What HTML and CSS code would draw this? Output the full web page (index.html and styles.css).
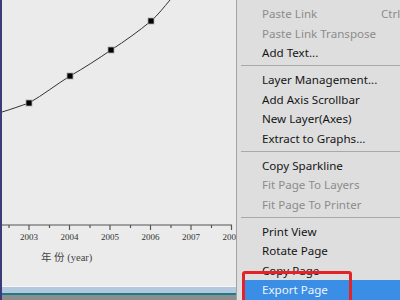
FILE: index.html
```html
<!DOCTYPE html>
<html lang="en">
<head>
    <meta charset="UTF-8">
    <title>Graph Context Menu</title>
    <link rel="stylesheet" href="styles.css">
</head>
<body>
    <div class="window">
        <div class="graph">
            <svg class="plot" width="234" height="286" viewBox="0 0 234 286">
                <!-- data curve -->
                <path d="M0 112 C10 109 18 106 27 103 C41 95 55 84 68 76 C82 68 96 59 109 50 C123 41 137 31 149 21 C156 15 162 7 168 0" fill="none" stroke="#333" stroke-width="1"/>
                <g fill="#000" stroke="#aaa" stroke-width="0.8">
                    <rect x="24" y="100" width="6" height="6"/>
                    <rect x="65" y="73" width="6" height="6"/>
                    <rect x="106" y="47" width="6" height="6"/>
                    <rect x="146" y="18" width="6" height="6"/>
                </g>
                <!-- x axis -->
                <g stroke="#555" stroke-width="1.2">
                    <line x1="0" y1="225" x2="230" y2="225"/>
                    <line x1="27" y1="225" x2="27" y2="230"/>
                    <line x1="67.5" y1="225" x2="67.5" y2="230"/>
                    <line x1="108" y1="225" x2="108" y2="230"/>
                    <line x1="148.5" y1="225" x2="148.5" y2="230"/>
                    <line x1="189" y1="225" x2="189" y2="230"/>
                    <line x1="229.5" y1="225" x2="229.5" y2="230"/>
                    <line x1="7" y1="225" x2="7" y2="228"/>
                    <line x1="47.5" y1="225" x2="47.5" y2="228"/>
                    <line x1="88" y1="225" x2="88" y2="228"/>
                    <line x1="128.5" y1="225" x2="128.5" y2="228"/>
                    <line x1="169" y1="225" x2="169" y2="228"/>
                    <line x1="209.5" y1="225" x2="209.5" y2="228"/>
                </g>
                <g class="tick-label" text-anchor="middle">
                    <text x="27" y="240">2003</text>
                    <text x="67.5" y="240">2004</text>
                    <text x="108" y="240">2005</text>
                    <text x="148.5" y="240">2006</text>
                    <text x="189" y="240">2007</text>
                    <text x="229.5" y="240">2008</text>
                </g>
                <text class="axis-title" x="39" y="261">年 份 (year)</text>
            </svg>
            <div class="strip strip-light"></div>
            <div class="strip strip-blue"></div>
            <div class="strip strip-teal"></div>
            <div class="strip strip-gray"></div>
        </div>

        <div class="menu">
            <div class="item disabled"><span class="label">Paste Link</span><span class="key">Ctrl</span></div>
            <div class="item disabled"><span class="label">Paste Link Transpose</span></div>
            <div class="item"><span class="label">Add Text...</span></div>
            <div class="sep"></div>
            <div class="item"><span class="label">Layer Management...</span></div>
            <div class="item"><span class="label">Add Axis Scrollbar</span></div>
            <div class="item"><span class="label">New Layer(Axes)</span></div>
            <div class="item"><span class="label">Extract to Graphs...</span></div>
            <div class="sep"></div>
            <div class="item"><span class="label">Copy Sparkline</span></div>
            <div class="item disabled"><span class="label">Fit Page To Layers</span></div>
            <div class="item disabled"><span class="label">Fit Page To Printer</span></div>
            <div class="sep"></div>
            <div class="item"><span class="label">Print View</span></div>
            <div class="item"><span class="label">Rotate Page</span></div>
            <div class="item"><span class="label">Copy Page</span></div>
            <div class="item active"><span class="label">Export Page</span></div>
        </div>

        <div class="highlight-box"></div>
    </div>
</body>
</html>
```

FILE: styles.css
```css
body {
    margin: 0;
    background: #dedede;
    font-family: "Noto Sans", Arial, sans-serif;
}

.window {
    position: relative;
    display: flex;
    width: 400px;
    height: 300px;
    overflow: hidden;
}

.graph {
    width: 234px;
    display: flex;
    flex-direction: column;
    background: #ebebeb;
    border-left: 2px solid #3d3a7c;
}

.plot {
    display: block;
}

.tick-label {
    font-family: "Liberation Serif", serif;
    font-size: 9px;
    fill: #333;
}

.axis-title {
    font-family: "Liberation Serif", "Noto Sans CJK SC", serif;
    font-size: 10.5px;
    fill: #444;
}

.strip-light {
    height: 1px;
    background: #f6f6f6;
}

.strip-blue {
    height: 6px;
    background: #b3c7df;
}

.strip-teal {
    height: 2px;
    background: #1b7d86;
}

.strip-gray {
    flex: 1;
    background: #8d8d8d;
}

.menu {
    flex: 1;
    border-left: 1px solid #a3a3a3;
    background: #dedede;
    padding-top: 4px;
    font-size: 11.6px;
    color: #151515;
}

.item {
    display: flex;
    align-items: center;
    height: 19.5px;
    margin-left: 5px;
    padding-left: 20px;
    white-space: nowrap;
}

.item .label {
    min-width: 119px;
}

.item.disabled {
    color: #8c8c8c;
}

.item.active {
    background: #3b8ee5;
    color: #eef4ff;
}

.sep {
    height: 1px;
    margin: 2.5px 0 4px 4px;
    background: #a9a9a9;
}

.highlight-box {
    position: absolute;
    left: 242px;
    top: 271px;
    width: 104px;
    height: 40px;
    border: 3.5px solid #e3222a;
    border-radius: 3px;
}
```
